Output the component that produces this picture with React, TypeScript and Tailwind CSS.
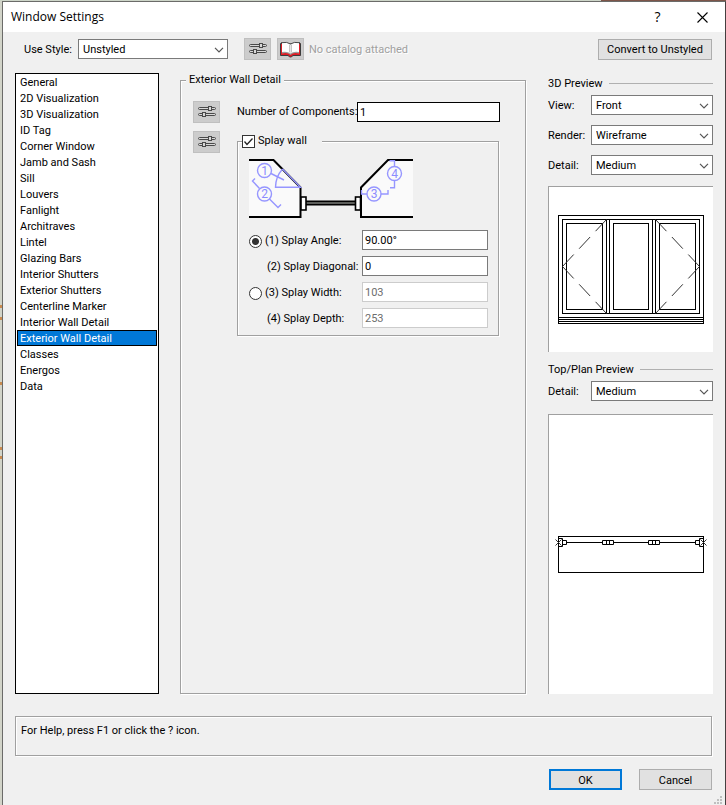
import { useState } from 'react'
import type { ReactNode } from 'react'

const categories = [
  'General',
  '2D Visualization',
  '3D Visualization',
  'ID Tag',
  'Corner Window',
  'Jamb and Sash',
  'Sill',
  'Louvers',
  'Fanlight',
  'Architraves',
  'Lintel',
  'Glazing Bars',
  'Interior Shutters',
  'Exterior Shutters',
  'Centerline Marker',
  'Interior Wall Detail',
  'Exterior Wall Detail',
  'Classes',
  'Energos',
  'Data',
]

const etched = 'border border-[#a0a0a0] shadow-[1px_1px_0_#fff,inset_1px_1px_0_#fff]'

function SelectBox({ id, options, className = '' }: { id: string; options: string[]; className?: string }) {
  return (
    <div className={`relative h-5 ${className}`}>
      <select id={id} className="block h-5 w-full appearance-none border border-[#7a7a7a] bg-white pl-1 pr-5 pt-[2px] leading-4 outline-none">
        {options.map((option) => (
          <option key={option}>{option}</option>
        ))}
      </select>
      <svg className="pointer-events-none absolute right-1 top-2 h-[6px] w-[10px]" viewBox="0 0 10 6" fill="none" stroke="#555" strokeWidth="1.2">
        <path d="M1 0.8L5 4.8L9 0.8" />
      </svg>
    </div>
  )
}

function IconButton({ label, children }: { label: string; children: ReactNode }) {
  return (
    <button type="button" aria-label={label} className="h-[22px] w-[27px] shrink-0 border border-[#bfbfbf] bg-[#cccccc]">
      {children}
    </button>
  )
}

function SlidersIcon() {
  return (
    <svg className="-m-px block h-[22px] w-[27px]" viewBox="0 0 27 22" fill="#d8d8d8" stroke="#4a4a4a" strokeWidth="1">
      <rect x="5.5" y="6.5" width="17" height="2" rx="1" />
      <rect x="15.5" y="5.5" width="3" height="4" />
      <rect x="5.5" y="12.5" width="17" height="2" rx="1" />
      <rect x="9.5" y="11.5" width="3" height="4" />
    </svg>
  )
}

function BookIcon() {
  return (
    <svg className="-m-px block h-[22px] w-[27px]" viewBox="0 0 27 22" strokeLinejoin="round">
      <path d="M3.5 5.500v12h7.5q1.500 1.500 2.500 1.500t2.500-1.500h7.500v-12z" fill="#e01b24" stroke="#3c3c3c" />
      <path d="M5 15.500q5.500-1.500 8.500 1.500q3-3 8.500-1.500V5.500H5z" fill="#9a9a9a" />
      <path d="M5 4.700q5.500-1 8.500 1.300v9.500Q10.500 13 5 14z" fill="#fff" />
      <path d="M22 4.700q-5.500-1-8.500 1.300v9.500Q16.500 13 22 14z" fill="#fff" />
      <path d="M4 4.700q6.500-1.200 9.500 1.300q3-2.500 9.500-1.300" fill="none" stroke="#4a4a4a" />
      <path d="M12.500 6.500v8M14.500 6.500v8" stroke="#c4c4c4" />
    </svg>
  )
}

function SplayDiagram() {
  return (
    <svg className="block h-[59px] w-[164px]" viewBox="0 0 164 59" fill="none">
      <path d="M0 1H24.500L51.500 28.500V58H0" fill="#fafafa" stroke="#000" strokeWidth="2" />
      <path d="M164 1H139L112 28.500V58H164" fill="#fafafa" stroke="#000" strokeWidth="2" />
      <rect x="57" y="41.500" width="49" height="5" fill="#000" />
      <path d="M57 44H106" stroke="#b9bcb5" />
      <rect x="52" y="38" width="5" height="13" fill="#fff" stroke="#000" strokeWidth="1.600" />
      <rect x="106.500" y="38" width="5" height="13" fill="#fff" stroke="#000" strokeWidth="1.600" />
      <g stroke="#9696ff" strokeWidth="1.400">
        <circle cx="15.500" cy="11.500" r="7" />
        <circle cx="15.500" cy="35" r="7" />
        <circle cx="125" cy="35" r="7" />
        <circle cx="145.500" cy="14.500" r="7" />
        <path d="M22 14.500L35 21M33.500 10L51.500 28.300H26.500Q26.500 18 33.500 10" />
        <path d="M6 19.500L3.500 22L10.500 29.500M20.500 40L29 48.500L32 45.500" />
        <path d="M112.500 31V35H118M132 35H139V31" />
        <path d="M140.500 1.700H145.500V7.500M145.500 21.500V28.700H141" />
      </g>
      <g fill="#8c8cff" fontSize="12" textAnchor="middle" className="font-['Roboto',sans-serif]">
        <text x="15.500" y="15.700">1</text>
        <text x="15.500" y="39.200">2</text>
        <text x="125" y="39.200">3</text>
        <text x="145.500" y="18.700">4</text>
      </g>
    </svg>
  )
}

function FrontView() {
  return (
    <svg className="block h-[109px] w-[146px]" viewBox="9 28 146 109" fill="none" stroke="#000">
      <rect x="9.500" y="28.500" width="145" height="108" />
      <rect x="13.500" y="32.500" width="137" height="94" />
      <path d="M57.500 32.500v94M60.500 32.500v94M103.500 32.500v94M106.500 32.500v94" />
      <rect x="17.500" y="36.500" width="36" height="86" />
      <rect x="64.500" y="36.500" width="35" height="86" />
      <rect x="110.500" y="36.500" width="36" height="86" />
      <path d="M9.500 130.500h145M9.500 132.500h145M9.500 134.500h145" />
      <g stroke="#333" strokeDasharray="16 8">
        <path d="M57.500 32.500L13.500 79.500" />
        <path d="M57.500 126.500L13.500 79.500" />
        <path d="M106.500 32.500L150.500 79.500" />
        <path d="M106.500 126.500L150.500 79.500" />
      </g>
    </svg>
  )
}

function PlanView() {
  return (
    <svg className="block h-[37px] w-[152px]" viewBox="6 16 152 37" fill="none" stroke="#000">
      <rect x="9.500" y="16.500" width="145" height="36" />
      <path d="M17.500 22.500h36M64.500 22.500h35M110.500 22.500h36" />
      <path d="M53.500 20.500h11v4h-11zM57.500 20.500v4M60.500 20.500v4" />
      <path d="M99.500 20.500h11v4h-11zM103.500 20.500v4M106.500 20.500v4" />
      <path d="M9.500 18.500h4v8h-4M13.500 20.500h4v4h-4" />
      <path d="M154.500 18.500h-4v8h4M150.500 20.500h-4v4h4" />
      <path d="M6.500 19.500l6 6M12.500 19.500l-6 6M151.500 19.500l6 6M157.500 19.500l-6 6" stroke="#333" />
    </svg>
  )
}

function PreviewHeading({ children }: { children: ReactNode }) {
  return (
    <h2 className="flex h-5 items-center gap-[6px]">
      <span className="pt-[2px]">{children}</span>
      <span className="h-px flex-1 bg-[#b0b0b0]" />
    </h2>
  )
}

function PreviewRow({ id, label, options }: { id: string; label: string; options: string[] }) {
  return (
    <div className="flex items-center">
      <label htmlFor={id} className="w-[43px] pt-[2px]">{label}</label>
      <SelectBox id={id} options={options} className="flex-1" />
    </div>
  )
}

type SplayRowProps = {
  id: string
  label: string
  value: string
  mode?: string
  active: string
  disabled: boolean
  onMode?: (mode: string) => void
}

function SplayRow({ id, label, value, mode, active, disabled, onMode }: SplayRowProps) {
  return (
    <div className="flex h-5 items-center">
      <div className="flex w-[113px] shrink-0 items-center gap-[3px] whitespace-nowrap pt-[2px]">
        {mode && (
          <input
            type="radio"
            name="splay"
            id={`${id}-mode`}
            checked={active === mode}
            onChange={() => onMode?.(mode)}
            className="size-[13px] shrink-0 appearance-none rounded-full border border-[#333] bg-white checked:bg-[radial-gradient(circle,#333_0_3px,#fff_4px)]"
          />
        )}
        <label htmlFor={mode ? `${id}-mode` : id} className={mode ? '' : 'pl-[18px]'}>
          {label}
        </label>
      </div>
      <input
        id={id}
        aria-label={label}
        defaultValue={value}
        disabled={disabled}
        className="h-5 w-full min-w-0 flex-1 border border-[#7a7a7a] bg-white px-[2px] outline-none disabled:border-[#cccccc] disabled:text-[#6d6d6d]"
      />
    </div>
  )
}

export default function App() {
  const [selected, setSelected] = useState('Exterior Wall Detail')
  const [mode, setMode] = useState('angle')

  return (
    <div className="flex min-h-screen flex-col bg-[#d2d4c9] font-['Roboto',sans-serif] text-[11px] leading-[14px] text-black">
      <div className="flex h-px">
        <div className="flex-1 bg-[#cdd5c8]" />
        <div className="w-[125px] bg-[#7d5549]" />
      </div>
      <div className="flex flex-1">
        <div className="flex w-[2px] shrink-0 flex-col">
          <div className="h-[304px]" />
          <div className="h-[3px] bg-[#c98a4f]" />
          <div className="h-[9px]" />
          <div className="h-[3px] bg-[#c98a4f]" />
          <div className="h-[62px]" />
          <div className="h-[3px] bg-[#c98a4f]" />
          <div className="h-[62px]" />
          <div className="h-[3px] bg-[#c98a4f]" />
          <div className="h-[6px]" />
          <div className="h-[3px] bg-[#c98a4f]" />
        </div>

        <div className="relative flex min-w-0 flex-1 flex-col border border-b-0 border-[#6b6b69] border-r-[#453f3f] bg-[#f0f0f0]">
          <header className="flex h-[30px] items-center bg-white pl-2">
            <h1 className="flex-1 text-[12px] leading-4 font-['Open_Sans',sans-serif]">Window Settings</h1>
            <button type="button" aria-label="Help" className="h-full w-[45px] text-[14px] font-['Open_Sans',sans-serif]">
              ?
            </button>
            <button type="button" aria-label="Close" className="flex h-full w-[45px] items-center justify-center">
              <svg className="size-[11px]" viewBox="0 0 11 11" stroke="#000" strokeWidth="1.100">
                <path d="M0.500 0.500L10.500 10.500M10.500 0.500L0.500 10.500" />
              </svg>
            </button>
          </header>

          <main className="flex flex-1 flex-col px-3 pb-[15px] pt-[6px]">
            <div className="flex h-[22px] items-center">
              <label htmlFor="use-style" className="w-[63px] shrink-0 pl-[9px] pt-[2px]">Use Style:</label>
              <SelectBox id="use-style" options={['Unstyled']} className="mr-4 w-[150px]" />
              <div className="flex gap-[6px]">
                <IconButton label="Style options"><SlidersIcon /></IconButton>
                <IconButton label="Catalog"><BookIcon /></IconButton>
              </div>
              <span className="flex-1 pl-[5px] pt-[2px] text-[#a0a0a0] [text-shadow:1px_1px_0_#fff]">No catalog attached</span>
              <button type="button" className="mr-px h-[21px] w-[114px] border border-[#adadad] bg-[#e1e1e1] pt-[2px]">
                Convert to Unstyled
              </button>
            </div>

            <div className="mt-[13px] flex flex-1 gap-[21px]">
              <ul role="listbox" aria-label="Categories" className="w-[144px] shrink-0 border border-black bg-white px-px">
                {categories.map((name) => (
                  <li
                    key={name}
                    role="option"
                    aria-selected={name === selected}
                    onClick={() => setSelected(name)}
                    className={`h-4 border px-[2px] leading-4 ${
                      name === selected ? 'border-black bg-[#0078d7] text-white' : 'border-transparent'
                    }`}
                  >
                    {name}
                  </li>
                ))}
              </ul>

              <fieldset className={`mr-px min-w-0 flex-1 ${etched}`}>
                <legend className="ml-[5px] bg-[#f0f0f0] px-[3px]">Exterior Wall Detail</legend>
                <div className="grid grid-cols-[27px_minmax(0,1fr)] gap-x-[17px] gap-y-2 pl-3 pr-[25px] pt-[14px]">
                  <IconButton label="Component options"><SlidersIcon /></IconButton>
                  <div className="flex items-center">
                    <label htmlFor="components" className="w-[120px] shrink-0 whitespace-nowrap">Number of Components:</label>
                    <input id="components" defaultValue="1" className="h-5 min-w-0 flex-1 border border-black bg-white px-[2px] outline-none" />
                  </div>

                  <IconButton label="Splay options"><SlidersIcon /></IconButton>
                  <fieldset className={`mr-px mt-[3px] min-w-0 ${etched}`}>
                    <legend className="ml-1 bg-[#f0f0f0] pr-[15px]">
                      <span className="flex items-center gap-[3px]">
                        <span className="relative size-[13px]">
                          <input
                            type="checkbox"
                            id="splay-wall"
                            defaultChecked
                            className="peer block size-[13px] appearance-none border border-[#333] bg-white"
                          />
                          <svg className="pointer-events-none absolute inset-0 hidden size-[13px] peer-checked:block" viewBox="0 0 13 13" fill="none" stroke="#222" strokeWidth="1.300">
                            <path d="M2.500 6.500L5 9.500L10.500 3.500" />
                          </svg>
                        </span>
                        <label htmlFor="splay-wall">Splay wall</label>
                      </span>
                    </legend>
                    <div className="pb-[7px] pl-[11px] pr-[10px] pt-[11px]">
                      <SplayDiagram />
                      <div className="mt-3 flex flex-col gap-[6px]">
                        <SplayRow id="angle" label="(1) Splay Angle:" value="90.00°" mode="angle" active={mode} disabled={mode !== 'angle'} onMode={setMode} />
                        <SplayRow id="diagonal" label="(2) Splay Diagonal:" value="0" active={mode} disabled={mode !== 'angle'} />
                        <SplayRow id="width" label="(3) Splay Width:" value="103" mode="width" active={mode} disabled={mode !== 'width'} onMode={setMode} />
                        <SplayRow id="depth" label="(4) Splay Depth:" value="253" active={mode} disabled={mode !== 'width'} />
                      </div>
                    </div>
                  </fieldset>
                </div>
              </fieldset>

              <aside className="flex w-[165px] shrink-0 flex-col">
                <PreviewHeading>3D Preview</PreviewHeading>
                <div className="mt-[2px] flex flex-col gap-[10px]">
                  <PreviewRow id="view" label="View:" options={['Front']} />
                  <PreviewRow id="render" label="Render:" options={['Wireframe']} />
                  <PreviewRow id="detail-3d" label="Detail:" options={['Medium', 'Low', 'High']} />
                </div>
                <div className="mb-[7px] mt-[11px] flex h-[166px] items-center justify-center border-l border-t border-[#a0a0a0] bg-white">
                  <FrontView />
                </div>
                <PreviewHeading>Top/Plan Preview</PreviewHeading>
                <div className="mt-[2px]">
                  <PreviewRow id="detail-plan" label="Detail:" options={['Medium', 'Low', 'High']} />
                </div>
                <div className="mt-[13px] flex flex-1 items-center justify-center border-l border-t border-[#a0a0a0] bg-white">
                  <PlanView />
                </div>
              </aside>
            </div>

            <p className={`mr-px mt-[22px] h-10 px-[5px] py-[7px] ${etched}`}>For Help, press F1 or click the ? icon.</p>

            <div className="mr-px mt-[13px] flex justify-end gap-[17px]">
              <button type="button" className="h-[21px] w-[73px] border-2 border-[#0078d7] bg-[#e1e1e1] pt-[2px]">OK</button>
              <button type="button" className="h-[21px] w-[73px] border border-[#adadad] bg-[#e1e1e1] pt-[2px]">Cancel</button>
            </div>
          </main>

          <svg className="absolute bottom-px right-[3px] size-2" viewBox="0 0 8 8" fill="#bfbfbf">
            <path d="M6 0h2v2h-2zM3 3h2v2h-2zM6 3h2v2h-2zM0 6h2v2h-2zM3 6h2v2h-2zM6 6h2v2h-2z" />
          </svg>
        </div>
      </div>
    </div>
  )
}
